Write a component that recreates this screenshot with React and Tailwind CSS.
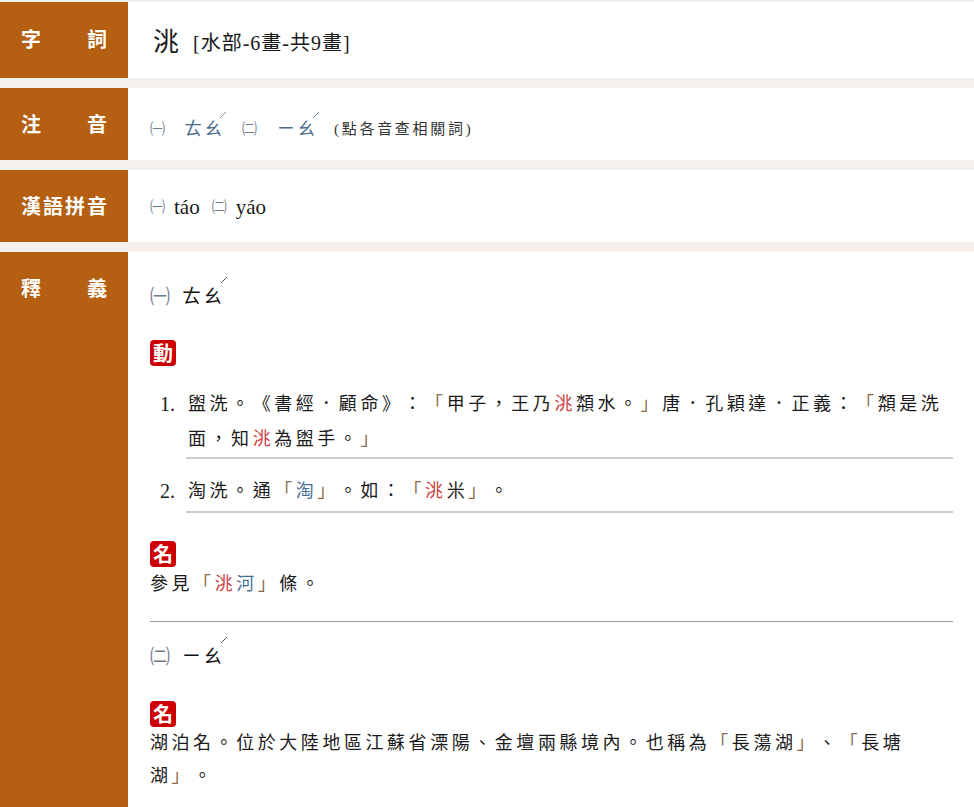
const SERIF = "font-['Liberation_Serif','Noto_Sans_CJK_TC',serif]";

function Row({ label, children, className = "", labelPad = "pt-[23px]" }) {
  return (
    <div className={`flex bg-white ${className}`}>
      <div className="w-[128px] shrink-0 bg-[#b45f12] px-[21px] text-white font-bold text-[20px] leading-[26px] font-['Noto_Sans_CJK_TC',sans-serif]">
        <div className={`flex justify-between ${labelPad}`}>
          {label.map((c) => (
            <span key={c}>{c}</span>
          ))}
        </div>
      </div>
      <div className="flex-1 min-w-0">{children}</div>
    </div>
  );
}

function Bopo({ text, className = "", tick = "right-[-3px] top-[-5px]" }) {
  return (
    <span className={`relative inline-block tracking-[2px] ${className}`}>
      {text}
      <svg className={`absolute ${tick}`} width="9" height="9" viewBox="0 0 9 9">
        <path d="M2 7 L8 1" stroke="currentColor" strokeWidth="1" opacity="0.75" />
      </svg>
    </span>
  );
}

const Q = ({ children }) => <span className="text-[#8b6b4a]">{children}</span>;
const B = ({ children }) => <span className="text-[#4a6f96]">{children}</span>;
const R = ({ children }) => <span className="text-[#cc4444]">{children}</span>;

function Badge({ children, className = "" }) {
  return (
    <div className={`w-[26px] h-[26px] rounded-[4px] bg-[#cc0000] text-white text-[20px] leading-[26px] font-bold text-center font-['Noto_Sans_CJK_TC',sans-serif] ${className}`}>
      {children}
    </div>
  );
}

function Num({ children, className = "" }) {
  return <span className={`text-[15px] text-[#6b7c8a] ${className}`}>{children}</span>;
}

export default function App() {
  return (
    <div className={`min-h-[807px] h-[807px] overflow-hidden bg-[#f5f0eb] pt-[2px] text-[#1a1a1a] [text-spacing-trim:space-all] ${SERIF}`}>
      <Row label={["字", "詞"]} className="h-[76px]" labelPad="pt-[24px]">
        <div className="flex items-center h-full pl-[25px] pt-[6px]">
          <span className="text-[26px] leading-none">洮</span>
          <span className="ml-[14px] text-[20px] tracking-[1px]">[水部-6畫-共9畫]</span>
        </div>
      </Row>
      <Row label={["注", "音"]} className="h-[72px] mt-[10px]">
        <div className="flex items-center h-full pl-[22px] pt-[10px]">
          <Num>㈠</Num>
          <Bopo text="ㄊㄠ" className="ml-[19px] text-[18px] text-[#4a6a8a]" />
          <Num className="ml-[18px]">㈡</Num>
          <Bopo text="ㄧㄠ" className="ml-[20px] text-[18px] text-[#4a6a8a]" />
          <span className="ml-[17px] text-[15px] tracking-[2.7px] text-[#333]">(點各音查相關詞)</span>
        </div>
      </Row>
      <Row label={["漢", "語", "拼", "音"]} className="h-[72px] mt-[10px]">
        <div className="flex items-center h-full pl-[22px] pt-[3px] text-[21px]">
          <Num>㈠</Num>
          <span className="ml-[9px]">táo</span>
          <Num className="ml-[12px]">㈡</Num>
          <span className="ml-[9px]">yáo</span>
        </div>
      </Row>
      <Row label={["釋", "義"]} className="h-[555px] mt-[10px]">
        <div className="pl-[22px] pr-[21px]">
          <div className="flex items-center h-[30px] mt-[30px]">
            <Num className="text-[#2c5f8a] text-[20px]">㈠</Num>
            <Bopo text="ㄊㄠ" className="ml-[12px] text-[19px] text-[#111]" tick="right-[-4px] top-[-7px]" />
          </div>
          <Badge className="mt-[28px]">動</Badge>
          <ol className="mt-[21px] text-[18px] leading-[35px] tracking-[3.55px]">
            <li className="flex">
              <span className="w-[36px] shrink-0 text-right pr-[11px] tracking-normal text-[20px]">1.</span>
              <div className="flex-1 border-b-2 border-[#cccccc] pl-[2px]">
                盥洗。《書經．顧命》：<Q>「</Q>甲子，王乃<R>洮</R>頮水。<Q>」</Q>唐．孔穎達．正義：<Q>「</Q>頮是洗面，知<R>洮</R>為盥手。<Q>」</Q>
              </div>
            </li>
            <li className="flex mt-[15px]">
              <span className="w-[36px] shrink-0 text-right pr-[11px] tracking-normal text-[20px]">2.</span>
              <div className="flex-1 border-b-2 border-[#cccccc] pb-[2px] pl-[2px]">
                淘洗。通<Q>「</Q><B>淘</B><Q>」</Q>。如：<Q>「</Q><R>洮</R>米<Q>」</Q>。
              </div>
            </li>
          </ol>
          <Badge className="mt-[28px]">名</Badge>
          <p className="text-[18px] leading-[34px] tracking-[3.55px]">
            參見<Q>「</Q><R>洮</R><B>河</B><Q>」</Q>條。
          </p>
          <div className="mt-[20px] border-t border-[#999]" />
          <div className="flex items-center h-[30px] mt-[20px]">
            <Num className="text-[#2c5f8a] text-[20px]">㈡</Num>
            <Bopo text="ㄧㄠ" className="ml-[12px] text-[19px] text-[#111]" tick="right-[-4px] top-[-7px]" />
          </div>
          <Badge className="mt-[29px]">名</Badge>
          <p className="text-[18px] leading-[33px] tracking-[3.55px]">
            湖泊名。位於大陸地區江蘇省溧陽、金壇兩縣境內。也稱為<Q>「</Q>長蕩湖<Q>」</Q>、<Q>「</Q>長塘湖<Q>」</Q>。
          </p>
        </div>
      </Row>
    </div>
  );
}
